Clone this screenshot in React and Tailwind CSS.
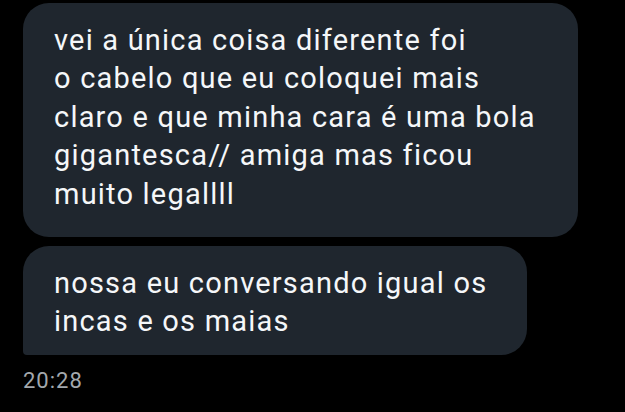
import React from "react";

const messages = [
    {
        width: "w-[555px]",
        corner: "rounded-[26px] pb-[24px]",
        lines: [
            "vei a única coisa diferente foi",
            "o cabelo que eu coloquei mais",
            "claro e que minha cara é uma bola",
            "gigantesca// amiga mas ficou",
            "muito legallll",
        ],
    },
    {
        width: "w-[504px]",
        corner: "rounded-[26px] rounded-bl-[4px] pb-[14px]",
        lines: ["nossa eu conversando igual os", "incas e os maias"],
    },
];

function Bubble({ msg }) {
    return (
        <div
            className={`${msg.width} ${msg.corner} bg-[#1f262e] pl-[31px] pr-4 pt-[18px] text-[29px] leading-[38.4px] tracking-[1.2px] text-[#f5f7f9]`}>
            {msg.lines.map((line, i) => (
                <div key={i} className="whitespace-nowrap">
                    {line}
                </div>
            ))}
        </div>
    );
}

export default function App() {
    return (
        <div
            className="w-[625px] h-[412px] overflow-hidden bg-black pl-[23px] pt-[3px]"
            style={{ fontFamily: "Roboto, 'Noto Sans', sans-serif" }}>
            <div className="flex flex-col gap-[9px]">
                {messages.map((msg, i) => (
                    <Bubble key={i} msg={msg} />
                ))}
            </div>
            <div className="mt-[12px] text-[22px] leading-[28px] tracking-[1px] text-[#a3a8ad]">
                20:28
            </div>
        </div>
    );
}
